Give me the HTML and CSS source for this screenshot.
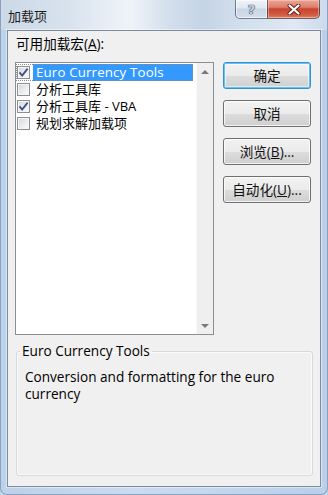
FILE: index.html
```html
<!DOCTYPE html>
<html lang="zh-CN">
<head>
<meta charset="utf-8">
<title>加载项</title>
<link rel="stylesheet" href="styles.css">
</head>
<body>
<div class="window">
  <div class="titlebar">
    <span class="title">加载项</span>
    <div class="caption">
      <div class="cap-btn help"><span class="q">?</span></div>
      <div class="cap-btn close">
        <svg width="14" height="11" viewBox="0 0 14 11">
          <path d="M2.5 1.5 L11.5 9.5 M11.5 1.5 L2.5 9.5" stroke="#5a2118" stroke-width="4" stroke-linecap="round"/>
          <path d="M2.5 1.5 L11.5 9.5 M11.5 1.5 L2.5 9.5" stroke="#ffffff" stroke-width="2.2" stroke-linecap="round"/>
        </svg>
      </div>
    </div>
  </div>
  <div class="client">
    <div class="main">
      <div class="label">可用加载宏(<u>A</u>):</div>
      <div class="listbox">
        <div class="items">
          <div class="item focused">
            <span class="cb"><svg width="11" height="11" viewBox="0 0 11 11"><path d="M1.5 5.4 L4.2 8.6 L9.6 1.6" fill="none" stroke="#3a5288" stroke-width="1.8"/></svg></span>
            <span class="text sel lat">Euro Currency Tools</span>
          </div>
          <div class="item">
            <span class="cb"></span>
            <span class="text">分析工具库</span>
          </div>
          <div class="item">
            <span class="cb"><svg width="11" height="11" viewBox="0 0 11 11"><path d="M1.5 5.4 L4.2 8.6 L9.6 1.6" fill="none" stroke="#3a5288" stroke-width="1.8"/></svg></span>
            <span class="text">分析工具库 - VBA</span>
          </div>
          <div class="item">
            <span class="cb"></span>
            <span class="text">规划求解加载项</span>
          </div>
        </div>
        <div class="scrollbar">
          <span class="arrow up"></span>
          <span class="arrow down"></span>
        </div>
      </div>
      <div class="buttons">
        <div class="btn default">确定</div>
        <div class="btn">取消</div>
        <div class="btn">浏览(<u>B</u>)...</div>
        <div class="btn">自动化(<u>U</u>)...</div>
      </div>
    </div>
    <fieldset class="group">
      <legend>Euro Currency Tools</legend>
      <p class="desc">Conversion and formatting for the euro currency</p>
    </fieldset>
  </div>
</div>
</body>
</html>
```

FILE: styles.css
```css
* { box-sizing: border-box; }

html, body {
  margin: 0;
  padding: 0;
  width: 328px;
  height: 495px;
  overflow: hidden;
  background: #c3d7ee;
  font-family: "Open Sans", "Noto Sans CJK SC", sans-serif;
  font-size: 13.6px;
  color: #000;
}

.window {
  width: 328px;
  height: 495px;
  background: linear-gradient(to right, #bcd1ea 0%, #c9dbf0 40%, #c2d6ee 70%, #b9cfea 100%);
  border: 1px solid #8aa2c0;
  border-top: none;
  border-radius: 0 0 7px 7px;
}

.titlebar {
  height: 30px;
  display: flex;
  align-items: flex-start;
  background: linear-gradient(to right,
    #cdd9e7 0%, #d7e2ee 20%, #e9eff6 34%, #eef3f8 40%, #d2deeb 52%,
    #c5d4e6 62%, #d3e0ee 75%, #dfe8f3 90%, #cbdaec 100%);
}

.title {
  align-self: center;
  padding-left: 7px;
  padding-top: 1px;
  font-family: "Noto Sans CJK SC", sans-serif;
  font-size: 13px;
  line-height: 16px;
  color: #1b1b1b;
}

.caption {
  margin-left: auto;
  margin-right: 7px;
  display: flex;
}

.cap-btn {
  height: 19px;
  display: flex;
  align-items: center;
  justify-content: center;
  border: 1px solid rgba(50, 62, 84, 0.65);
  border-top: none;
}

.help {
  width: 32px;
  border-right: none;
  border-radius: 0 0 0 5px;
  background: linear-gradient(#eef3f9 0%, #dfe7f1 45%, #c9d5e4 50%, #d3dfec 100%);
  box-shadow: inset 0 0 0 1px rgba(255, 255, 255, 0.6);
}

.q {
  font-family: "DejaVu Sans", sans-serif;
  font-weight: bold;
  font-size: 13px;
  line-height: 13px;
  color: #c9d3df;
  text-shadow: 0 0 1px #3e4a5c, 0 0 1px #3e4a5c, 0 0 1px #3e4a5c;
}

.close {
  width: 53px;
  border-radius: 0 0 5px 0;
  background: linear-gradient(#e9a597 0%, #dd7f6c 40%, #c7432f 50%, #d25f44 85%, #e08a6c 100%);
  box-shadow: inset 0 0 0 1px rgba(255, 220, 210, 0.45);
}

.close svg { display: block; }

.client {
  margin: 0 6px;
  height: 457px;
  border: 1px solid #7f8b9b;
  background: #f0f0f0;
  box-shadow: 0 0 0 1px rgba(255, 255, 255, 0.45);
  padding: 5px 0 0 7px;
}

.main {
  display: grid;
  grid-template-columns: 199px 88px;
  grid-template-rows: 16px 273px;
  column-gap: 9px;
  row-gap: 10px;
}

.label {
  grid-column: 1 / 3;
  line-height: 16px;
  padding-left: 1px;
}

.listbox {
  grid-column: 1;
  grid-row: 2;
  border: 1px solid #8a8e96;
  background: #fff;
  display: flex;
}

.items {
  flex: 1;
  padding-top: 1px;
  font-size: 13px;
}

.item {
  height: 17px;
  display: flex;
  align-items: center;
  padding-left: 1px;
  margin-right: 3px;
}

.item.focused {
  outline: 1px dotted #8a8a8a;
  outline-offset: -1px;
}

.cb {
  width: 13px;
  height: 13px;
  flex: none;
  border: 1px solid #8e8f8f;
  background: linear-gradient(135deg, #d2d4d8 0%, #eeeff1 60%, #fbfbfb 100%);
  box-shadow: inset 0 0 0 1px #f5f5f5;
  display: flex;
  align-items: center;
  justify-content: center;
}

.cb svg { display: block; }

.text {
  flex: 1;
  margin-left: 3px;
  padding-left: 3px;
  line-height: 17px;
  height: 17px;
  white-space: nowrap;
}

.text.lat { font-size: 13.3px; letter-spacing: 0.15px; }

.text.sel {
  background: #3399ff;
  color: #fff;
}

.scrollbar {
  width: 17px;
  flex: none;
  background: #efefef;
  border-left: 1px solid #f9f9f9;
  display: flex;
  flex-direction: column;
  justify-content: space-between;
}

.arrow {
  height: 17px;
  display: flex;
  align-items: center;
  justify-content: center;
}

.arrow::before {
  content: "";
  width: 0;
  height: 0;
  border-left: 4px solid transparent;
  border-right: 4px solid transparent;
}

.arrow.up::before { border-bottom: 4px solid #7a7a7a; }
.arrow.down::before { border-top: 4px solid #7a7a7a; }

.buttons {
  grid-column: 2;
  grid-row: 2;
  display: flex;
  flex-direction: column;
  gap: 11px;
}

.btn {
  height: 27px;
  border: 1px solid #707070;
  border-radius: 3px;
  background: linear-gradient(#f2f2f2 0%, #ebebeb 50%, #dddddd 51%, #cfcfcf 100%);
  box-shadow: inset 0 0 0 1px rgba(255, 255, 255, 0.75);
  display: flex;
  align-items: center;
  justify-content: center;
  line-height: 16px;
  color: #111;
}

.btn.default {
  border-color: #3a8fd0;
  box-shadow: inset 0 0 0 1px #5fc4f3, inset 0 0 0 2px rgba(255, 255, 255, 0.5);
}

.group {
  margin: 8px 0 0 1px;
  width: 297px;
  height: 133px;
  border: 1px solid #d5dadf;
  border-radius: 3px;
  box-shadow: inset 0 0 0 1px #fafafa;
  padding: 0 8px;
}

.group legend {
  padding: 0 2px;
  margin-left: -5px;
  line-height: 16px;
}

.desc {
  margin: 9px 0 0;
  line-height: 17px;
}
```
